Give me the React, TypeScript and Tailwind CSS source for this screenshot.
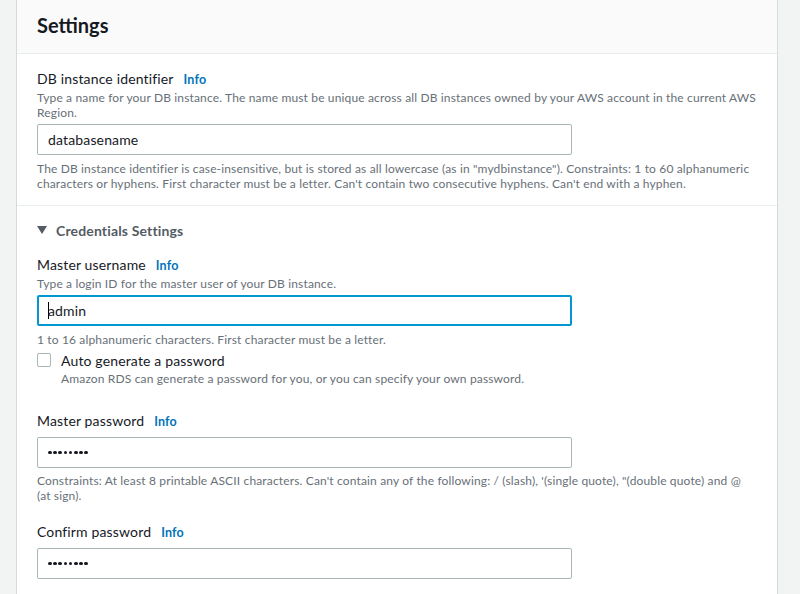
import React from 'react';

const font = { fontFamily: 'Lato, "Noto Sans", sans-serif' };

function Label({ text }: { text: string }) {
  return (
    <div className="flex items-baseline h-[22px] leading-[22px] text-[14px] tracking-[0.15px] text-[#16191f] overflow-hidden">
      <span>{text}</span>
      <span className="ml-[10px] text-[12.5px] font-bold text-[#0073bb]">Info</span>
    </div>
  );
}

function Hint({ children, className = '' }: { children: React.ReactNode; className?: string }) {
  return <p className={`text-[12px] leading-[15px] tracking-[0.15px] text-[#687078] ${className}`}>{children}</p>;
}

function Field({ value, focused = false, caret = false }: { value: string; focused?: boolean; caret?: boolean }) {
  return (
    <div
      className={`w-[535px] h-[31px] rounded-[2px] bg-white flex items-center ${
        focused ? 'border-2 border-[#0297d0] pl-[9px]' : 'border border-[#aab7b8] pl-[10px]'
      }`}
    >
      {caret && <span className="w-px h-[17px] bg-black mr-[-1px]" />}
      <span className="text-[14px] tracking-[0.15px] text-[#16191f]">{value}</span>
    </div>
  );
}

function Dots() {
  return (
    <div className="w-[535px] h-[31px] rounded-[2px] bg-white flex items-center border border-[#aab7b8] pl-[10px] gap-[1.6px]">
      {Array.from({ length: 8 }).map((_, i) => (
        <span key={i} className="w-[3.6px] h-[3.6px] rounded-full bg-[#16191f]" />
      ))}
    </div>
  );
}

export default function App() {
  return (
    <div className="w-[800px] h-[594px] overflow-hidden bg-[#f2f3f3] flex" style={font}>
      <div className="ml-[16px] w-[762px] h-[620px] bg-white border-x border-[#d5dbdb] flex flex-col">
        {/* Header */}
        <div className="h-[54px] bg-[#fafafa] border-b border-[#eaeded] px-[20px] flex items-center">
          <h2 className="text-[20px] font-bold text-[#16191f] -mt-[4px]">Settings</h2>
        </div>

        {/* DB identifier */}
        <div className="px-[20px] pt-[14px] pb-[14px] border-b border-[#eaeded]">
          <Label text="DB instance identifier" />
          <Hint>
            Type a name for your DB instance. The name must be unique across all DB instances owned by your AWS account in the current AWS Region.
          </Hint>
          <div className="mt-[4px]">
            <Field value="databasename" />
          </div>
          <Hint className="mt-[6px]">
            The DB instance identifier is case-insensitive, but is stored as all lowercase (as in "mydbinstance"). Constraints: 1 to 60 alphanumeric characters or hyphens. First character must be a letter. Can't contain two consecutive hyphens. Can't end with a hyphen.
          </Hint>
        </div>

        {/* Credentials */}
        <div className="px-[20px] pt-[13px]">
          <div className="flex items-center h-[22px] gap-[9px] text-[14px] tracking-[0.15px] font-bold text-[#545b64]">
            <svg width="10" height="8" viewBox="0 0 10 8">
              <path d="M0 0 H10 L5 8 Z" fill="#545b64" />
            </svg>
            <span>Credentials Settings</span>
          </div>

          <div className="mt-[13px]">
            <Label text="Master username" />
            <Hint>Type a login ID for the master user of your DB instance.</Hint>
            <div className="mt-[4px]">
              <Field value="admin" focused caret />
            </div>
            <Hint className="mt-[6px]">1 to 16 alphanumeric characters. First character must be a letter.</Hint>
          </div>

          <div className="mt-[2px] flex gap-[10px]">
            <div className="w-[14px] h-[14px] mt-[4px] border border-[#aab7b8] rounded-[2px] bg-white" />
            <div>
              <div className="h-[22px] flex items-center text-[14px] tracking-[0.15px] text-[#16191f]">Auto generate a password</div>
              <Hint>Amazon RDS can generate a password for you, or you can specify your own password.</Hint>
            </div>
          </div>

          <div className="mt-[24px]">
            <Label text="Master password" />
            <div className="mt-[5px]">
              <Dots />
            </div>
            <Hint className="mt-[5px]">
              Constraints: At least 8 printable ASCII characters. Can't contain any of the following: / (slash), '(single quote), "(double quote) and @ (at sign).
            </Hint>
          </div>

          <div className="mt-[18px]">
            <Label text="Confirm password" />
            <div className="mt-[5px]">
              <Dots />
            </div>
          </div>
        </div>
      </div>
    </div>
  );
}
